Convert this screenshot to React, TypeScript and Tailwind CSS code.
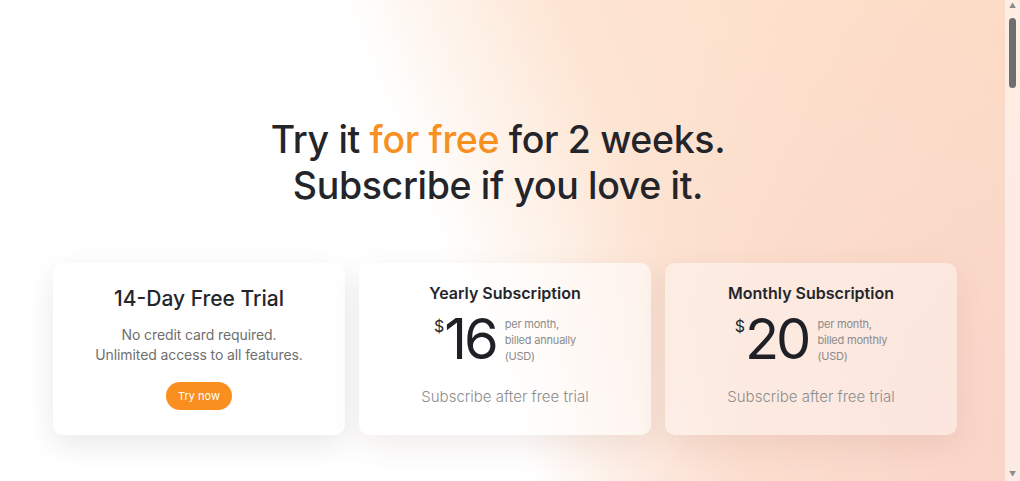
import React from "react";

const plans = [
  { id: "yearly", title: "Yearly Subscription", price: "16", note: ["per month,", "billed annually", "(USD)"], tone: "bg-white/55" },
  { id: "monthly", title: "Monthly Subscription", price: "20", note: ["per month,", "billed monthly", "(USD)"], tone: "bg-white/40" },
];

function PlanCard({ plan }: { plan: (typeof plans)[number] }) {
  return (
    <div
      className={`h-[172px] rounded-[10px] ${plan.tone} shadow-[0_10px_30px_rgba(120,80,60,0.10)] flex flex-col items-center pt-[19px]`}
    >
      <h3 className="text-[16px] leading-[22px] font-semibold text-[#25262b]">{plan.title}</h3>
      <div className="mt-[7px] flex items-start">
        <span className="mt-[6px] text-[16px] leading-[18px] text-[#25262b]">$</span>
        <span className="text-[56px] leading-[56px] font-normal tracking-[-3px] text-[#1f2026]">{plan.price}</span>
        <div className="ml-[9px] pt-[5px] flex flex-col text-[11px] leading-[16px] tracking-[-0.2px] text-[#8b8b8b]">
          {plan.note.map((n) => (
            <span key={n}>{n}</span>
          ))}
        </div>
      </div>
      <p className="mt-[20px] text-[15px] leading-[20px] font-light text-[#8d8d8d]">Subscribe after free trial</p>
    </div>
  );
}

function Scrollbar() {
  return (
    <aside className="w-[15px] h-[481px] bg-white/50 flex flex-col items-center text-[#8a8a8a]">
      <span className="h-[12px] text-[7px] leading-[12px]">▲</span>
      <div className="mt-[6px] h-[70px] w-[7px] rounded-full bg-[#6e6e6e]" />
      <div className="flex-1" />
      <span className="h-[12px] text-[7px] leading-[12px]">▼</span>
    </aside>
  );
}

export default function App() {
  return (
    <div className="h-screen overflow-hidden flex bg-[radial-gradient(circle_at_100%_90%,#f9d4c9_0%,rgba(249,212,201,0)_45%),linear-gradient(68deg,#ffffff_44%,#fde5d3_62%,#fddcc4_100%)] font-['Inter','Liberation_Sans',sans-serif]">
      <main className="w-[1005px] pt-[117px]">
        <h1 className="pr-[9px] text-center text-[37.5px] leading-[46px] font-medium tracking-[-0.35px] text-[#24252b]">
          Try it <span className="text-[#f7901f]">for free</span> for 2 weeks.
          <br />
          Subscribe if you love it.
        </h1>

        <div className="mt-[54px] pl-[5px]">
          <div className="w-[904px] mx-auto grid grid-cols-3 gap-[14px]">
            <div className="h-[172px] rounded-[10px] bg-white shadow-[0_10px_30px_rgba(0,0,0,0.09)] flex flex-col items-center pt-[22px]">
              <h3 className="text-[21px] leading-[28px] font-medium text-[#25262b]">14-Day Free Trial</h3>
              <p className="mt-[12px] text-center text-[14px] leading-[20px] tracking-[-0.1px] text-[#6f6f6f]">
                No credit card required.
                <br />
                Unlimited access to all features.
              </p>
              <button className="mt-[17px] h-[28px] w-[66px] rounded-full bg-[#f98f1e] text-[11px] text-white">
                Try now
              </button>
            </div>
            {plans.map((p) => (
              <PlanCard key={p.id} plan={p} />
            ))}
          </div>
        </div>
      </main>
      <Scrollbar />
    </div>
  );
}
